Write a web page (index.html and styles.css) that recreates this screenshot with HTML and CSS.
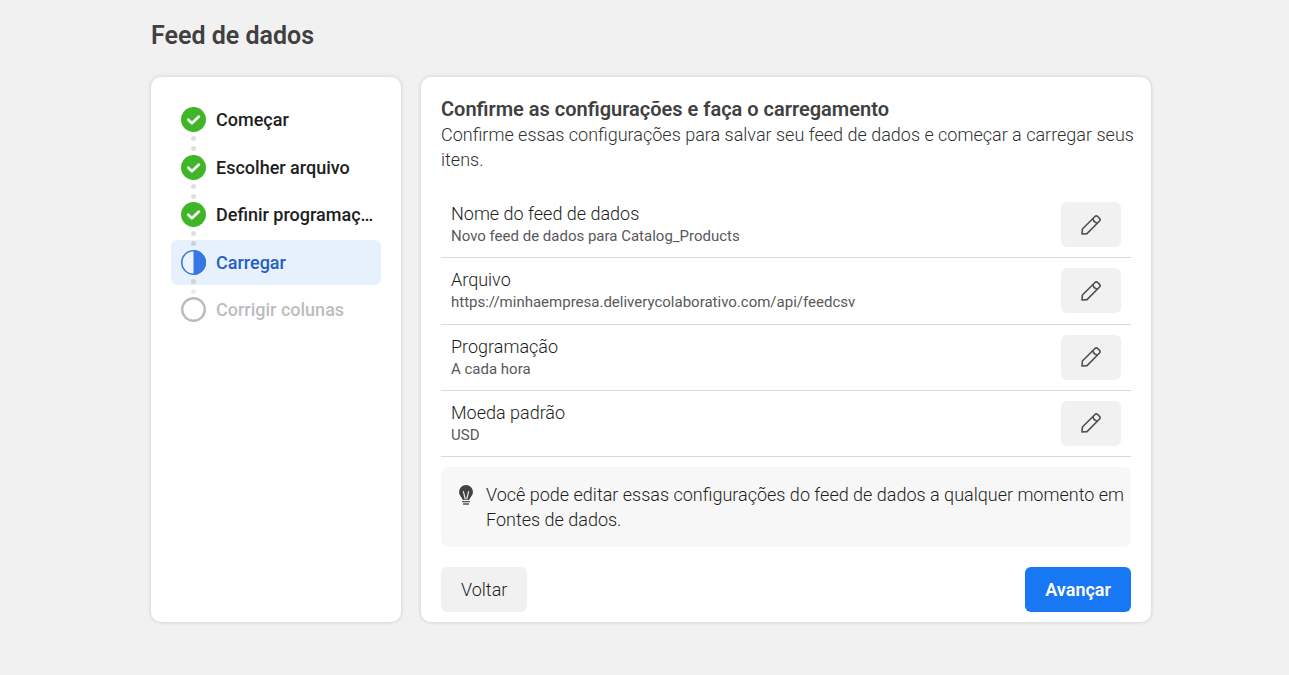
FILE: index.html
```html
<!DOCTYPE html>
<html lang="pt-BR">
<head>
<meta charset="utf-8">
<meta name="viewport" content="width=device-width, initial-scale=1">
<title>Feed de dados</title>
<link rel="stylesheet" href="styles.css">
</head>
<body>
<svg width="0" height="0" class="sprite" aria-hidden="true">
  <symbol id="check" viewBox="0 0 25 25">
    <circle cx="12.5" cy="12.5" r="12.5" fill="#3fb628"/>
    <path d="M7.3 12.8l3.6 3.4 7-6.6" fill="none" stroke="#fff" stroke-width="2.7" stroke-linecap="round" stroke-linejoin="round"/>
  </symbol>
  <symbol id="pencil" viewBox="0 0 20 20">
    <g fill="none" stroke="#505050" stroke-width="1.6" stroke-linejoin="round">
      <path d="M1 19l.4-5L13.7 1.7a2.3 2.3 0 0 1 3.2 0l1.400 1.400a2.300 2.300 0 0 1 0 3.200L6 18.600z"/>
      <path d="M12 3.400c.2 2.700 1.900 4.400 4.600 4.600"/>
    </g>
  </symbol>
</svg>
<div class="page">
  <h1 class="page-title">Feed de dados</h1>
  <div class="layout">
    <nav class="card steps-card" aria-label="Etapas">
      <ol class="steps">
        <li class="step"><svg class="step-icon"><use href="#check"/></svg><span class="step-label">Começar</span></li>
        <li class="step"><svg class="step-icon"><use href="#check"/></svg><span class="step-label">Escolher arquivo</span></li>
        <li class="step"><svg class="step-icon"><use href="#check"/></svg><span class="step-label">Definir programaç…</span></li>
        <li class="step step-current" aria-current="step">
          <svg class="step-icon" viewBox="0 0 25 25"><circle cx="12.5" cy="12.5" r="11.7" fill="#eef4fd" stroke="#3b7be4" stroke-width="1.6"/><path d="M12.5 0a12.5 12.5 0 0 1 0 25z" fill="#3578e5"/></svg>
          <span class="step-label">Carregar</span>
        </li>
        <li class="step step-pending">
          <svg class="step-icon" viewBox="0 0 25 25"><circle cx="12.5" cy="12.5" r="11.3" fill="#fff" stroke="#b9babc" stroke-width="2.4"/></svg>
          <span class="step-label">Corrigir colunas</span>
        </li>
      </ol>
    </nav>
    <main class="card content">
      <h2 class="content-title">Confirme as configurações e faça o carregamento</h2>
      <p class="content-text">Confirme essas configurações para salvar seu feed de dados e começar a carregar seus itens.</p>
      <ul class="settings">
        <li class="setting">
          <div><div class="setting-name">Nome do feed de dados</div><div class="setting-value">Novo feed de dados para Catalog_Products</div></div>
          <button class="button edit" type="button" aria-label="Editar nome do feed de dados"><svg class="edit-icon"><use href="#pencil"/></svg></button>
        </li>
        <li class="setting">
          <div><div class="setting-name">Arquivo</div><div class="setting-value">https://minhaempresa.deliverycolaborativo.com/api/feedcsv</div></div>
          <button class="button edit" type="button" aria-label="Editar arquivo"><svg class="edit-icon"><use href="#pencil"/></svg></button>
        </li>
        <li class="setting">
          <div><div class="setting-name">Programação</div><div class="setting-value">A cada hora</div></div>
          <button class="button edit" type="button" aria-label="Editar programação"><svg class="edit-icon"><use href="#pencil"/></svg></button>
        </li>
        <li class="setting">
          <div><div class="setting-name">Moeda padrão</div><div class="setting-value">USD</div></div>
          <button class="button edit" type="button" aria-label="Editar moeda padrão"><svg class="edit-icon"><use href="#pencil"/></svg></button>
        </li>
      </ul>
      <div class="tip">
        <svg class="tip-icon" viewBox="0 0 20 20" aria-hidden="true">
          <path d="M10 0a7 7 0 0 0-7 7c0 2.7 1.7 4.3 2.9 5.9.6.8.8 1.5.9 2.1h6.4c.1-.6.3-1.3.9-2.1C15.3 11.3 17 9.7 17 7a7 7 0 0 0-7-7z" fill="#404244"/>
          <path d="M7.4 6.6l1.8 7.4M12.6 6.6l-1.8 7.4" fill="none" stroke="#e9e9e9" stroke-width="1.2" stroke-linecap="round"/>
          <path d="M6.5 16.6h7M7.5 19h5" fill="none" stroke="#505254" stroke-width="1.4" stroke-linecap="round"/>
        </svg>
        <p>Você pode editar essas configurações do feed de dados a qualquer momento em Fontes de dados.</p>
      </div>
      <div class="actions">
        <button class="button" type="button">Voltar</button>
        <button class="button primary" type="button">Avançar</button>
      </div>
    </main>
  </div>
</div>
</body>
</html>
```
FILE: styles.css
```css
* { box-sizing: border-box; }

body {
  margin: 0;
  background: #f1f1f1;
  color: #1c1e21;
  font: 300 18px/25px Roboto, "Liberation Sans", sans-serif;
}

h1, h2, p, ol, ul { margin: 0; padding: 0; }
ol, ul { list-style: none; }

.sprite { position: absolute; }

.page { padding: 21px 138px 20px 151px; }

.page-title {
  margin-bottom: 26px;
  color: #404040;
  font-size: 25px;
  font-weight: 600;
  line-height: 30px;
}

.layout { display: flex; gap: 20px; }

.card {
  padding: 20px;
  border-radius: 10px;
  background: #fff;
  box-shadow: 0 0 4px rgba(0, 0, 0, .16);
}

.steps-card { flex: 0 0 250px; min-width: 0; }

.steps {
  display: flex;
  flex-direction: column;
  justify-content: space-between;
  min-height: 235px;
}

.step {
  position: relative;
  display: flex;
  align-items: center;
  gap: 10px;
  height: 45px;
  padding: 0 5px 0 10px;
  border-radius: 6px;
  font-weight: 500;
}

.step:not(:last-child)::after {
  content: "";
  position: absolute;
  z-index: 1;
  top: 39px;
  left: 20px;
  width: 5px;
  height: 5px;
  border-radius: 50%;
  background: rgba(0, 0, 0, .12);
  box-shadow: 0 10px rgba(0, 0, 0, .12);
}

.step-icon { flex: none; width: 25px; height: 25px; }
.step-label { white-space: nowrap; }

.step-current { background: #e7f0fd; color: #2460c4; }
.step-current:not(:last-child)::after { box-shadow: 0 10px rgba(0, 0, 0, .07); }
.step-pending { color: #bcbdbf; }

.content { flex: 1; min-width: 0; padding-bottom: 10px; }

.content-title {
  color: #404040;
  font-size: 20px;
  font-weight: 600;
  line-height: 25px;
}

.content-text { margin-right: -10px; color: #303132; }

.settings {
  display: grid;
  min-height: 265px;
  margin-top: 20px;
}

.setting {
  display: flex;
  align-items: center;
  justify-content: space-between;
  padding: 10px;
  border-bottom: 1px solid #d8dadc;
}

.setting-name { line-height: 24px; }

.setting-value {
  color: #58595b;
  font-size: 15px;
  font-weight: 400;
  line-height: 21px;
}

.button {
  height: 45px;
  padding: 0 20px;
  border: 0;
  border-radius: 6px;
  background: #f1f1f1;
  color: #1c1e21;
  font: inherit;
  cursor: pointer;
}

.edit { flex: none; width: 60px; }
.edit-icon { display: block; width: 20px; height: 20px; }

.primary { background: #1877f2; color: #fff; font-weight: 600; }

.tip {
  display: flex;
  gap: 10px;
  margin-top: 10px;
  padding: 15px 5px 15px 15px;
  border-radius: 8px;
  background: #f7f7f7;
}

.tip-icon { flex: none; width: 20px; height: 20px; margin-top: 3px; }

.actions {
  display: flex;
  justify-content: space-between;
  margin-top: 20px;
}
```
